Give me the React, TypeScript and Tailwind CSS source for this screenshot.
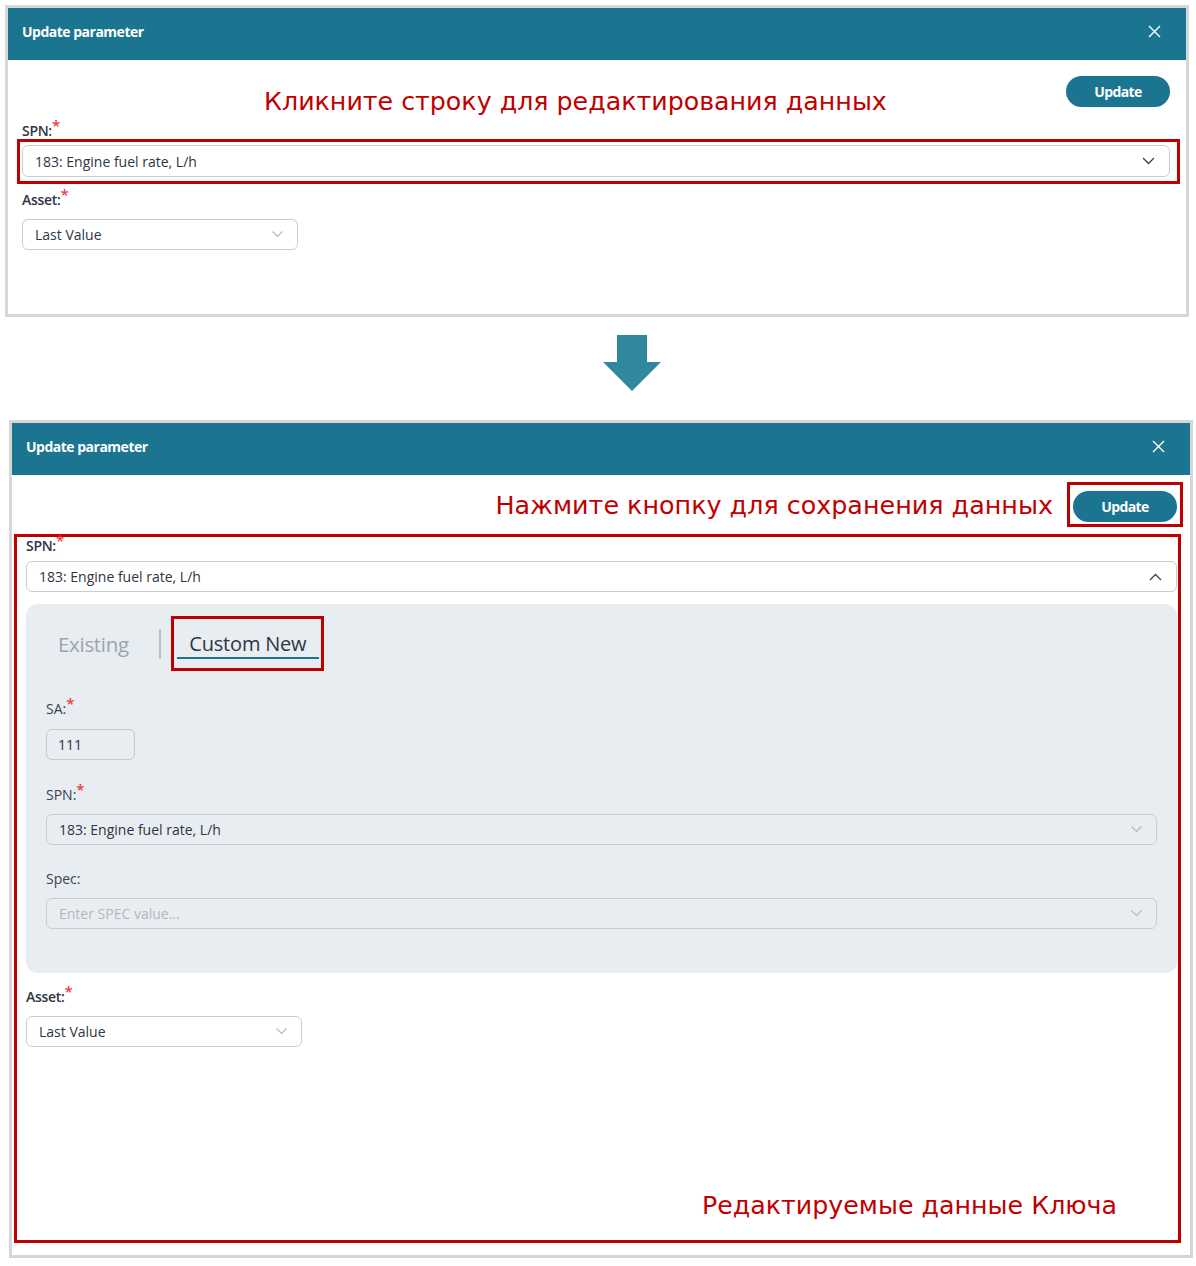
import React from 'react'

const ui = { fontFamily: '"Open Sans", "Liberation Sans", sans-serif' }
const note = { fontFamily: '"DejaVu Sans", "Liberation Sans", sans-serif' }

function Chevron({ up = false, light = false }: { up?: boolean; light?: boolean }) {
  if (light) {
    return (
      <svg width="11" height="7" viewBox="0 0 11 7" fill="none" className="shrink-0">
        <polyline points="0.5,0.5 5.5,5.5 10.5,0.5" stroke="#b4b9bf" strokeWidth="1.2" />
      </svg>
    )
  }
  return (
    <svg width="13" height="8" viewBox="0 0 13 8" fill="none" className="shrink-0">
      <polyline points={up ? '1,7 6.5,1.5 12,7' : '1,1 6.5,6.5 12,1'} stroke="#3a4150" strokeWidth="1.3" />
    </svg>
  )
}

function CloseIcon() {
  return (
    <svg width="13" height="13" viewBox="0 0 13 13" fill="none">
      <path d="M1 1 L12 12 M12 1 L1 12" stroke="white" strokeWidth="1.4" />
    </svg>
  )
}

function Label({ text, bold = false, required = true }: { text: string; bold?: boolean; required?: boolean }) {
  return (
    <div
      className={`text-[14px] leading-[20px] ${bold ? 'font-semibold text-[#2f3542] tracking-[-0.3px]' : 'text-[#3c4250]'}`}
      style={ui}
    >
      {text}
      {required && <span className="text-[#ef3b3b] relative top-[-5px] text-[15px] font-semibold">*</span>}
    </div>
  )
}

function Select({
  value,
  placeholder,
  up,
  light,
  className = '',
}: {
  value?: string
  placeholder?: string
  up?: boolean
  light?: boolean
  className?: string
}) {
  return (
    <div
      className={`h-[31px] flex items-center justify-between pl-[12px] pr-[14px] border border-[#c9cdd2] rounded-[6px] text-[14px] ${className}`}
      style={ui}
    >
      {value ? (
        <span className="text-[#2f3542]">{value}</span>
      ) : (
        <span className="text-[#b3b8be]">{placeholder}</span>
      )}
      <Chevron up={up} light={light} />
    </div>
  )
}

function Header() {
  return (
    <div className="h-[52px] bg-[#1b7490] flex items-center justify-between pl-[14px] pr-[25px] pb-[5px]">
      <span className="text-white text-[14px] font-bold tracking-[-0.5px]" style={ui}>
        Update parameter
      </span>
      <CloseIcon />
    </div>
  )
}

function UpdateButton() {
  return (
    <button
      className="w-[104px] h-[31px] rounded-full bg-[#1b7490] text-white text-[14px] font-bold tracking-[-0.6px]"
      style={ui}
    >
      Update
    </button>
  )
}

export default function App() {
  return (
    <div className="w-[1196px] h-[1266px] bg-white relative">
      {/* first dialog */}
      <div className="absolute left-[5px] top-[5px] w-[1184px] h-[312px] border-[3px] border-[#d6d6d6] bg-white">
        <Header />
        <div className="pl-[14px] pr-[16px] pt-[16px]">
          <div className="flex items-start h-[31px]">
            <span className="ml-[242px] mt-[11px] text-[25.3px] leading-[30px] text-[#c00000]" style={note}>
              Кликните строку для редактирования данных
            </span>
            <div className="ml-auto">
              <UpdateButton />
            </div>
          </div>
          <div className="mt-[13px]">
            <Label text="SPN:" bold />
          </div>
          <div className="-ml-[5px] -mr-[10px] pl-[2px] pr-[7px] pt-[3px] pb-[4px] border-[3px] border-[#c00000] mt-[-2px]">
            <Select value="183: Engine fuel rate, L/h" className="bg-white h-[32px]" />
          </div>
          <div className="mt-[5px]">
            <Label text="Asset:" bold />
          </div>
          <Select value="Last Value" light className="w-[276px] mt-[9px] bg-white" />
        </div>
      </div>

      {/* arrow */}
      <svg className="absolute left-[603px] top-[335px]" width="58" height="56" viewBox="0 0 58 56">
        <path d="M14 0 H44 V27 H58 L29 56 L0 27 H14 Z" fill="#31879e" />
      </svg>

      {/* second dialog */}
      <div className="absolute left-[9px] top-[420px] w-[1184px] h-[838px] border-[3px] border-[#d6d6d6] bg-white">
        <Header />
        <div className="flex items-start justify-end pt-[7px] pr-[7px]">
          <span className="mt-[8px] mr-[14px] text-[25.4px] leading-[30px] text-[#c00000]" style={note}>
            Нажмите кнопку для сохранения данных
          </span>
          <div className="border-[3px] border-[#c00000] pl-[3px] pr-[3px] pt-[6px] pb-[2px]">
            <UpdateButton />
          </div>
        </div>
        <div className="ml-[2px] mr-[9px] mt-[7px] h-[709px] border-[3px] border-[#c00000] pl-[9px] pr-[1px] flex flex-col">
          <div className="mt-[-2px]">
            <Label text="SPN:" bold />
          </div>
          <Select value="183: Engine fuel rate, L/h" up className="bg-white mt-[5px]" />
          <div className="mt-[12px] h-[369px] shrink-0 bg-[#e8edf2] rounded-[12px] pl-[20px] pr-[20px]">
            <div className="flex items-center h-[55px] mt-[12px]">
              <span className="ml-[12px] mt-[2px] text-[20.5px] text-[#9aa5ae] tracking-[-0.3px]" style={ui}>
                Existing
              </span>
              <div className="ml-[30px] w-[2px] h-[30px] bg-[#b9c0c6]" />
              <div className="ml-[10px] border-[3px] border-[#c00000] h-[55px] w-[153px] pl-[3px] pt-[11px]">
                <div
                  className="w-[142px] border-b-2 border-[#1b7490] text-center text-[20px] leading-[27px] text-[#2d3648] tracking-[-0.2px]"
                  style={ui}
                >
                  Custom New
                </div>
              </div>
            </div>
            <div className="mt-[27px]">
              <Label text="SA:" />
            </div>
            <div
              className="mt-[10px] w-[89px] h-[31px] border border-[#c4c9ce] rounded-[6px] flex items-center pl-[11px] text-[14px] text-[#2f3542]"
              style={ui}
            >
              111
            </div>
            <div className="mt-[24px]">
              <Label text="SPN:" />
            </div>
            <Select value="183: Engine fuel rate, L/h" light className="mt-[9px]" />
            <div className="mt-[24px]">
              <Label text="Spec:" required={false} />
            </div>
            <Select placeholder="Enter SPEC value..." light className="mt-[9px]" />
          </div>
          <div className="mt-[13px]">
            <Label text="Asset:" bold />
          </div>
          <Select value="Last Value" light className="w-[276px] mt-[9px] bg-white" />
          <div className="mt-auto mb-[19px] pl-[676px] text-[25.3px] leading-[30px] text-[#c00000]" style={note}>
            Редактируемые данные Ключа
          </div>
        </div>
      </div>
    </div>
  )
}
